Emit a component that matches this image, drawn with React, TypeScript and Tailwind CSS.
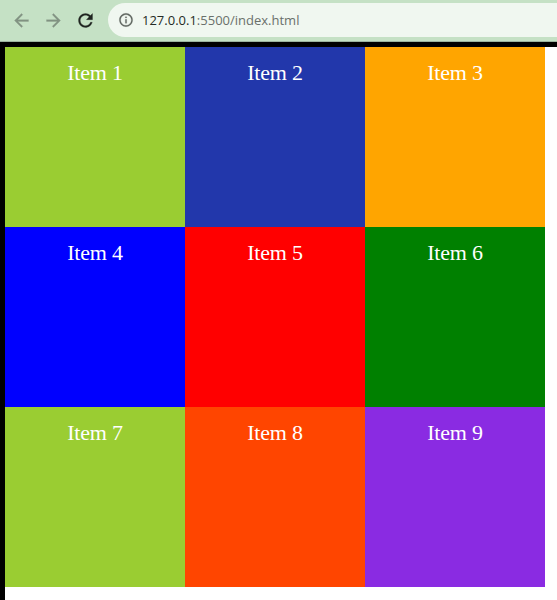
const items = [
  { label: 'Item 1', color: 'bg-[#9acd32]' },
  { label: 'Item 2', color: 'bg-[#2237ab]' },
  { label: 'Item 3', color: 'bg-[#ffa500]' },
  { label: 'Item 4', color: 'bg-[#0000ff]' },
  { label: 'Item 5', color: 'bg-[#ff0000]' },
  { label: 'Item 6', color: 'bg-[#008000]' },
  { label: 'Item 7', color: 'bg-[#9acd32]' },
  { label: 'Item 8', color: 'bg-[#ff4500]' },
  { label: 'Item 9', color: 'bg-[#8a2be2]' },
];

function Icon({ d, className }: { d: string; className: string }) {
  return (
    <svg viewBox="0 0 24 24" fill="currentColor" stroke="currentColor" strokeWidth={0.3} className={className}>
      <path d={d} />
    </svg>
  );
}

function Toolbar() {
  return (
    <header className="flex h-[42px] shrink-0 items-start border-b border-[#9cb39f] bg-[#c5e1c5] pt-[3px]">
      <div className="flex h-[34px] w-[108px] shrink-0 items-center gap-[11px] pl-[11px]">
        <Icon className="size-[21px] text-[#829383]" d="M20 11H7.83l5.59-5.59L12 4l-8 8 8 8 1.41-1.41L7.83 13H20v-2z" />
        <Icon className="size-[21px] text-[#829383]" d="M12 4l-1.41 1.41L16.17 11H4v2h12.17l-5.58 5.59L12 20l8-8z" />
        <Icon
          className="size-[21px] text-[#1f2420]"
          d="M17.65 6.35C16.2 4.9 14.21 4 12 4c-4.42 0-7.99 3.58-7.99 8s3.57 8 7.99 8c3.73 0 6.84-2.55 7.73-6h-2.08c-.82 2.33-3.04 4-5.65 4-3.31 0-6-2.69-6-6s2.69-6 6-6c1.66 0 3.14.69 4.22 1.78L13 11h7V4l-2.35 2.35z"
        />
      </div>
      <div className="flex h-[34px] flex-1 items-center rounded-l-full bg-[#f0f7f0] pl-[10px]">
        <Icon
          className="size-4 text-[#5f6660]"
          d="M11 7h2v2h-2zm0 4h2v6h-2zm1-9C6.48 2 2 6.48 2 12s4.48 10 10 10 10-4.48 10-10S17.52 2 12 2zm0 18c-4.41 0-8-3.59-8-8s3.59-8 8-8 8 3.59 8 8-3.59 8-8 8z"
        />
        <span className="ml-2 font-['Open_Sans','Noto_Sans',sans-serif] text-[13px] leading-[18px] whitespace-nowrap text-[#6a706b]">
          <span className="text-[#252b26]">127.0.0.1</span>:5500/index.html
        </span>
      </div>
    </header>
  );
}

export default function App() {
  return (
    <div className="flex h-screen flex-col overflow-hidden bg-white">
      <Toolbar />
      <main className="flex-1 border-t-5 border-l-5 border-black">
        <div className="grid w-[540px] grid-cols-3">
          {items.map((item) => (
            <div
              key={item.label}
              className={`h-[180px] pt-[13px] text-center font-['Liberation_Serif','Times_New_Roman',serif] text-[22px] leading-[25px] tracking-[-0.2px] text-white ${item.color}`}
            >
              {item.label}
            </div>
          ))}
        </div>
      </main>
    </div>
  );
}
